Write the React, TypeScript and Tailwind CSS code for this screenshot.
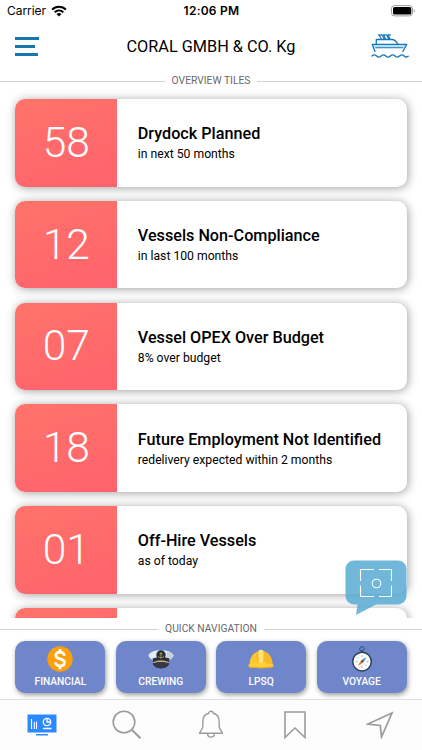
import React from "react";

type Tile = {
  count: string;
  title: string;
  desc: string;
};

const TILES: Tile[] = [
  { count: "58", title: "Drydock Planned", desc: "in next 50 months" },
  { count: "12", title: "Vessels Non-Compliance", desc: "in last 100 months" },
  { count: "07", title: "Vessel OPEX Over Budget", desc: "8% over budget" },
  {
    count: "18",
    title: "Future Employment Not Identified",
    desc: "redelivery expected within 2 months",
  },
  { count: "01", title: "Off-Hire Vessels", desc: "as of today" },
  { count: "", title: "", desc: "" },
];

const QUICK_NAV = [
  { label: "FINANCIAL", icon: <CoinIcon /> },
  { label: "CREWING", icon: <CapIcon /> },
  { label: "LPSQ", icon: <HelmetIcon /> },
  { label: "VOYAGE", icon: <CompassIcon /> },
];

function CoinIcon() {
  return (
    <svg width="26" height="26" viewBox="0 0 26 26">
      <circle cx="13" cy="13" r="12.7" fill="#fb9f0b" />
      <g fill="none" stroke="#fff" strokeWidth="2.8">
        <path d="M17.2 9.800C17.200 7.400 15.300 6.200 13.100 6.200c-2.400 0-4.200 1.200-4.200 3.300 0 4.600 8.500 2.300 8.500 6.900 0 2.200-1.800 3.500-4.300 3.500s-4.500-1.400-4.500-3.700" />
        <path d="M13 3v3.600M13 19.400v3.800" />
      </g>
    </svg>
  );
}

function CapIcon() {
  return (
    <svg width="26" height="26" viewBox="0 0 26 26">
      <path d="M.5 9.2C2 5.5 8 4.2 13 4.2s11 1.300 12.500 5c.3 2-3.500 4.200-4.700 5.400H5.200C4 13.400.2 11.200.5 9.2Z" fill="#e4ecf3" />
      <path d="M19 5.200c3.600.8 6 2.200 6.500 4 .3 2-3.500 4.200-4.700 5.400H18Z" fill="#c6d2de" />
      <path d="M4.600 12.600c4.500-1.800 12.300-1.800 16.800 0l-.6 5.600H5.200Z" fill="#27313f" />
      <path d="M5 16.300c4-2.300 12-2.300 16 0v1.500c-4-2-12-2-16 0Z" fill="#d9b072" />
      <path d="M4.700 17.600c4-2 12.600-2 16.600 0-.6 3-4 4.900-8.300 4.900s-7.700-1.900-8.300-4.900Z" fill="#2f3947" />
      <circle cx="13" cy="9" r="4.700" fill="#222a34" />
      <path d="M13 6v6M11.500 7.800h3M10.200 9.700c.5 3.100 5.100 3.100 5.600 0" fill="none" stroke="#c9b065" strokeWidth=".8" />
    </svg>
  );
}

function HelmetIcon() {
  return (
    <svg width="26" height="26" viewBox="0 0 26 26">
      <path d="M1.600 18.500C1.600 11 6 5 13 5s11.400 6 11.400 13.500Z" fill="#fdc72f" />
      <path d="M16 5.500c5.500 1.400 8.400 6.900 8.400 13H18Z" fill="#f9b924" />
      <path d="M10.600 4.500c1-1 3.800-1 4.800 0l-.5 11.800c-.6 1-3.200 1-3.800 0Z" fill="#ffe27a" />
      <path d="M8.500 6.600 9.300 15M17.500 6.600 16.700 15" stroke="#eeb01e" strokeWidth=".7" />
      <path d="M.6 18.400c4-1.600 20.800-1.600 24.800 0v2.300c-5 1.900-19.800 1.900-24.800 0Z" fill="#ffd03c" />
      <path d="M.6 20c5 1.500 19.800 1.500 24.800 0v.9c-5 1.700-19.800 1.700-24.800 0Z" fill="#eeae1f" />
    </svg>
  );
}

function CompassIcon() {
  return (
    <svg width="26" height="26" viewBox="0 0 26 26" className="overflow-visible">
      <circle cx="13" cy="2.900" r="2.300" fill="none" stroke="#34506f" strokeWidth="1" />
      <path d="M11.800 4.500h2.400V7h-2.400Z" fill="#34506f" />
      <circle cx="13" cy="15.600" r="9.300" fill="#fff" stroke="#2b4059" strokeWidth="1.500" />
      <path d="M13 9v2M13 20.200v2M6.500 15.600h2M17.500 15.600h2M8.500 11l1.300 1.300M17.500 20l-1.300-1.300" stroke="#7b8b99" strokeWidth=".7" />
      <path d="M17.500 11.100 14.200 16.600 12 14.400Z" fill="#2580bd" />
      <path d="M8.700 20.100 12 14.400 14.200 16.600Z" fill="#f3752b" />
      <circle cx="13" cy="15.600" r=".8" fill="#24384e" />
    </svg>
  );
}

function WifiIcon() {
  return (
    <svg width="16" height="12" viewBox="0 0 16 12" fill="none" stroke="#000" strokeWidth="2">
      <path d="M1.100 4.600c3.900-3.900 9.900-3.900 13.800 0M3.700 7.300c2.500-2.400 6.100-2.400 8.600 0" />
      <path d="m5.500 8.900 2.500 2.600 2.500-2.600c-1.500-1.300-3.500-1.300-5 0Z" fill="#000" stroke="none" />
    </svg>
  );
}

function BatteryIcon() {
  return (
    <svg width="26" height="12" viewBox="0 0 26 12">
      <rect x="1.500" y=".6" width="21" height="10.300" rx="3" fill="none" stroke="#999" />
      <rect x="3" y="2" width="18.300" height="7.600" rx="1.700" />
      <path d="M23.800 4.200c1.500.6 1.500 2.600 0 3.200Z" fill="#999" />
    </svg>
  );
}

function ShipIcon() {
  return (
    <svg width="38" height="26" viewBox="0 0 38 26" fill="none" stroke="#1674b8" strokeWidth="1.300" strokeLinejoin="round" strokeLinecap="round">
      <path d="M2 10.500h33.500l-1.400 3.200H2.800Z" fill="#b8e1fb" stroke="none" />
      <path d="M4 17.500 1.200 10.300H35.800l-3.900 7.200" />
      <path d="M4.800 13.800h27" strokeWidth="1.100" />
      <path d="M5.300 10.300V5.500h15.500c2.400 0 4.500 1.900 6.200 4.800" />
      <path d="M7.500.8h3.500l2.200 4.200M8.300 1.200l2 3.800M12.500.8h3l2.200 4.200M12.500.8l2.200 4.200M17 .8h2.500M17 .8l2 4.200" strokeWidth="1.200" />
      <path d="M1 22c1.800-1.600 3-1.600 4.600 0s3 1.600 4.600 0 3-1.600 4.600 0 3 1.600 4.600 0 3-1.600 4.600 0 3 1.600 4.600 0 3-1.600 4.600 0 2.600 1.400 4 .2" />
    </svg>
  );
}

function Divider({ label }: { label: string }) {
  return (
    <div className="flex h-4 items-center">
      <span className="h-px flex-1 bg-[#d2d2d2]" />
      <span className="px-[7px] text-[10.300px] leading-4 text-[#69696e]">{label}</span>
      <span className="h-px flex-1 bg-[#d2d2d2]" />
    </div>
  );
}

function TileCard({ tile }: { tile: Tile }) {
  return (
    <div className="flex h-[87.500px] shrink-0 rounded-[10px] bg-white shadow-[1px_1px_10px_rgba(0,0,0,0.38)]">
      <div className="flex w-[102px] items-center justify-center rounded-l-[10px] bg-linear-160 from-[#ff7369] to-[#ff626d] text-[42.500px] text-white">
        <span className="font-light">{tile.count}</span>
      </div>
      <div className="flex flex-col justify-center pl-[20.500px] pt-[3px]">
        <h3 className="text-[16.200px] leading-5 font-medium">{tile.title}</h3>
        <p className="text-[12.200px] leading-5">{tile.desc}</p>
      </div>
    </div>
  );
}

export default function App() {
  return (
    <div className="flex h-[750px] w-[422px] flex-col overflow-hidden bg-white font-[Roboto,sans-serif] text-black">
      {/* Status bar */}
      <div className="grid h-[21px] grid-cols-3 items-center pl-[7px] pr-[6px] font-[Inter,sans-serif] text-[12px]">
        <div className="flex items-center gap-[5px]">
          <span className="tracking-[-0.05px]">Carrier</span>
          <WifiIcon />
        </div>
        <span className="text-center font-semibold tracking-[0.25px]">12:06 PM</span>
        <div className="flex justify-end">
          <BatteryIcon />
        </div>
      </div>

      {/* Header */}
      <header className="flex h-[51px] items-center justify-between pl-[15px] pr-[13px]">
        <button className="flex w-[36px] flex-col gap-[5.500px]" aria-label="Menu">
          <span className="h-[2.500px] w-6 bg-[#1676ae]" />
          <span className="h-[2.500px] w-5 bg-[#1676ae]" />
          <span className="h-[2.500px] w-[23px] bg-[#1676ae]" />
        </button>
        <h1 className="text-[16.300px] leading-6">CORAL GMBH &amp; CO. Kg</h1>
        <ShipIcon />
      </header>

      <div className="pt-px">
        <Divider label="OVERVIEW TILES" />
      </div>

      {/* Overview tiles */}
      <main className="relative h-[529px]">
        <div className="flex h-full flex-col gap-[14.300px] overflow-hidden pl-[15.300px] pr-[15.500px] pt-[10px]">
          {TILES.map((tile, i) => (
            <TileCard key={i} tile={tile} />
          ))}
        </div>
        {/* floating scan button */}
        <svg className="absolute bottom-[2px] left-[345px]" width="62" height="56" viewBox="0 0 62 56">
          <path d="M9 .5h44a8.500 8.500 0 0 1 8.500 8.500v27a8.500 8.500 0 0 1-8.500 8.500H31L11 55l1.500-10.500H9A8.500 8.500 0 0 1 .5 36V9A8.500 8.500 0 0 1 9 .5Z" fill="#58abd4" fillOpacity=".86" />
          <g fill="none" stroke="#fff" strokeWidth="1.100">
            <path d="M15.500 21V9.500H29M34 9.500h12.500V21M46.500 25.500V36.500H34M29 36.500H15.500V25.500" />
            <circle cx="31.500" cy="23.500" r="4.300" />
          </g>
        </svg>
      </main>

      <div className="pt-[3px]">
        <Divider label="QUICK NAVIGATION" />
      </div>

      {/* Quick navigation */}
      <nav className="flex h-[62px] gap-[10.300px] pl-[15.300px] pr-[15.300px] pt-[4px]">
        {QUICK_NAV.map((item) => (
          <button
            key={item.label}
            className="flex h-[52px] flex-1 flex-col items-center rounded-[10px] bg-[#7086ca] pt-[4.500px] shadow-[1px_2px_5px_rgba(0,0,0,0.4)]"
          >
            {item.icon}
            <span className="mt-[2px] text-[10.200px] leading-4 font-medium text-white">{item.label}</span>
          </button>
        ))}
      </nav>

      {/* Tab bar */}
      <footer className="grid h-[51px] grid-cols-5 items-center justify-items-center border-t border-[#dedede] bg-[#fdfdfd] text-[#9b9b9b]">
        <svg width="30" height="22" viewBox="0 0 30 22">
          <path d="M.5.500h29v18H.5ZM9 20h12v1.500H9Z" fill="#2d89ff" />
          <g fill="none" stroke="#fff">
            <path d="M4.500 5v10M7.300 8v7M9.500 7.500V15" strokeWidth="1.100" />
            <circle cx="20" cy="8" r="3.700" strokeWidth="1.300" />
            <path d="M20 4.500V8h3.800M16 14.500h8.500" strokeWidth="1.300" />
          </g>
        </svg>
        <svg width="30" height="30" viewBox="0 0 30 30" fill="none" stroke="currentColor" strokeWidth="1.600">
          <circle cx="12" cy="12" r="10.800" />
          <path d="m19.800 19.800 8.700 8.500" strokeWidth="2" />
        </svg>
        <svg width="28" height="30" viewBox="0 0 28 30" fill="none" stroke="currentColor" strokeWidth="1.400" strokeLinejoin="round">
          <path d="M11.800 3.200C11.800.5 16.200.5 16.200 3.200c3.900 1 6 4.100 6 8.300v5.300c0 2.500 2.500 3.800 3.300 6.400h-23c.8-2.600 3.300-3.900 3.300-6.400v-5.300c0-4.200 2.100-7.300 6-8.300Z" />
          <path d="M10.600 23.500c0 4.800 6.800 4.800 6.800 0" />
        </svg>
        <svg width="22" height="28" viewBox="0 0 22 28" fill="none" stroke="currentColor" strokeWidth="1.600">
          <path d="M1 1h20v25.500L11 17 1 26.500Z" />
        </svg>
        <svg width="28" height="28" viewBox="0 0 28 28" fill="none" stroke="currentColor" strokeWidth="1.700">
          <path d="M26 2 1.800 13l12.500 1.500L15.500 26Z" />
        </svg>
      </footer>
    </div>
  );
}
